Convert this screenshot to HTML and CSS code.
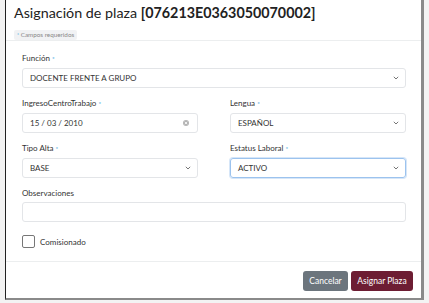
FILE: index.html
```html
<!DOCTYPE html>
<html lang="es">
<head>
<meta charset="utf-8">
<link rel="stylesheet" href="styles.css">
</head>
<body>
<div class="modal">
  <div class="modal-header">
    <div class="title">Asignación de plaza <b>[076213E0363050070002]</b></div>
    <span class="badge"><span class="req">*</span> Campos requeridos</span>
  </div>
  <div class="modal-body">
    <div class="field">
      <label class="lbl">Función <span class="req">*</span></label>
      <div class="ctrl select"><span>DOCENTE FRENTE A GRUPO</span><svg class="chev" width="6" height="4" viewBox="0 0 6 4"><path d="M0.8 0.8 L3 3 L5.2 0.8" fill="none" stroke="#666" stroke-width="0.9"/></svg></div>
    </div>
    <div class="row">
      <div class="field">
        <label class="lbl">IngresoCentroTrabajo <span class="req">*</span></label>
        <div class="ctrl"><span>15 / 03 / 2010</span><svg class="clear" width="6" height="6" viewBox="0 0 6 6"><circle cx="3" cy="3" r="3" fill="#b5b5b5"/><path d="M1.8 1.8 L4.2 4.2 M4.2 1.8 L1.8 4.2" stroke="#fff" stroke-width="0.8"/></svg></div>
      </div>
      <div class="field">
        <label class="lbl">Lengua <span class="req">*</span></label>
        <div class="ctrl select"><span>ESPAÑOL</span><svg class="chev" width="6" height="4" viewBox="0 0 6 4"><path d="M0.8 0.8 L3 3 L5.2 0.8" fill="none" stroke="#666" stroke-width="0.9"/></svg></div>
      </div>
    </div>
    <div class="row">
      <div class="field">
        <label class="lbl">Tipo Alta <span class="req">*</span></label>
        <div class="ctrl select"><span>BASE</span><svg class="chev" width="6" height="4" viewBox="0 0 6 4"><path d="M0.8 0.8 L3 3 L5.2 0.8" fill="none" stroke="#666" stroke-width="0.9"/></svg></div>
      </div>
      <div class="field">
        <label class="lbl">Estatus Laboral <span class="req">*</span></label>
        <div class="ctrl select focus"><span>ACTIVO</span><svg class="chev" width="6" height="4" viewBox="0 0 6 4"><path d="M0.8 0.8 L3 3 L5.2 0.8" fill="none" stroke="#666" stroke-width="0.9"/></svg></div>
      </div>
    </div>
    <div class="field">
      <label class="lbl">Observaciones</label>
      <div class="ctrl"></div>
    </div>
    <div class="check">
      <span class="box"></span>
      <span>Comisionado</span>
    </div>
  </div>
  <div class="modal-footer">
    <button class="btn btn-gray">Cancelar</button>
    <button class="btn btn-wine">Asignar Plaza</button>
  </div>
</div>
</body>
</html>
```
FILE: styles.css
```css
html, body {
  margin: 0;
  padding: 0;
}
body {
  width: 429px;
  height: 303px;
  background: #f3f3f3;
  font-family: Lato, "Open Sans", sans-serif;
  color: #333;
  display: flex;
  align-items: flex-start;
  overflow: hidden;
}
.modal {
  margin-left: 5px;
  width: 415px;
  height: 298px;
  background: #fff;
  border-left: 1px solid #222;
  border-right: 3px solid #8a8a8a;
  border-bottom: 2px solid #8a8a8a;
  display: flex;
  flex-direction: column;
}
.modal-header {
  border-bottom: 1px solid #eceeef;
  padding: 4px 8px 0;
  box-sizing: border-box;
  height: 41px;
}
.title {
  font-size: 14.3px;
  line-height: 17px;
  color: #222;
}
.title b {
  font-weight: 700;
}
.badge {
  display: inline-block;
  margin-top: 2px;
  background: #f1f2f4;
  color: #888;
  font-size: 6.3px;
  line-height: 10px;
  padding: 0 3px;
  border-radius: 2px;
}
.req {
  color: #3aa7e0;
  font-size: 0.8em;
}
.modal-body {
  padding: 11px 15px 0 16px;
  display: flex;
  flex-direction: column;
  gap: 9px;
  height: 221px;
  box-sizing: border-box;
  border-bottom: 1px solid #eceeef;
}
.row {
  display: grid;
  grid-template-columns: 176px 176px;
  column-gap: 32px;
}
.field {
  display: flex;
  flex-direction: column;
  gap: 3px;
}
.lbl {
  font-size: 8px;
  line-height: 12px;
  color: #333;
}
.ctrl {
  height: 20px;
  box-sizing: border-box;
  border: 1px solid #e3e5e8;
  border-radius: 3px;
  padding: 0 7px;
  display: flex;
  align-items: center;
  justify-content: space-between;
  font-size: 8px;
  color: #333;
}
.ctrl.focus {
  border-color: #9cc3ee;
  box-shadow: 0 0 0 1px #d6e6f8;
}
.chev {
  margin-right: -1px;
}
.clear {
  margin-right: 1px;
}
.check {
  margin-top: 4px;
  display: flex;
  align-items: center;
  gap: 5px;
  font-size: 8px;
}
.box {
  width: 13px;
  height: 13px;
  box-sizing: border-box;
  border: 1px solid #777;
  border-radius: 2px;
}
.modal-footer {
  display: flex;
  justify-content: flex-end;
  gap: 3px;
  padding: 9px 8px 0 0;
}
.btn {
  height: 20px;
  border: none;
  border-radius: 3px;
  color: #fff;
  font-family: Lato, "Open Sans", sans-serif;
  font-size: 8.5px;
  padding: 0 6px;
}
.btn-gray {
  background: #6c757d;
  width: 45px;
}
.btn-wine {
  background: #6d1d33;
  width: 62px;
}
```
